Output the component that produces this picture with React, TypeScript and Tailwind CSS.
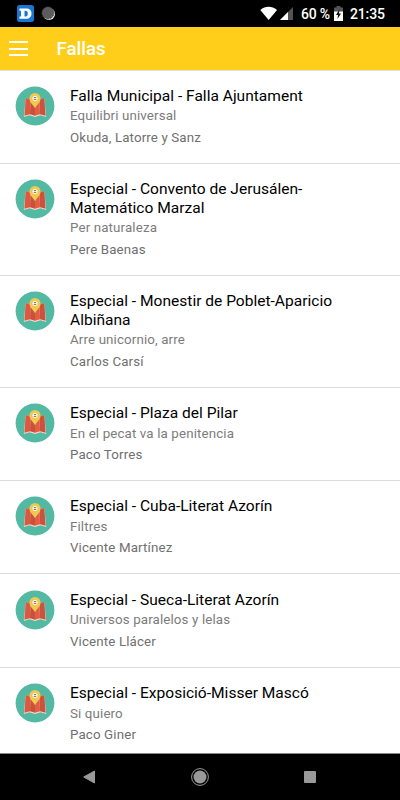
import React from 'react';

type Falla = { title: string[]; motto: string; artist: string };

const fallas: Falla[] = [
  { title: ['Falla Municipal - Falla Ajuntament'], motto: 'Equilibri universal', artist: 'Okuda, Latorre y Sanz' },
  { title: ['Especial - Convento de Jerusálen-', 'Matemático Marzal'], motto: 'Per naturaleza', artist: 'Pere Baenas' },
  { title: ['Especial - Monestir de Poblet-Aparicio', 'Albiñana'], motto: 'Arre unicornio, arre', artist: 'Carlos Carsí' },
  { title: ['Especial - Plaza del Pilar'], motto: 'En el pecat va la penitencia', artist: 'Paco Torres' },
  { title: ['Especial - Cuba-Literat Azorín'], motto: 'Filtres', artist: 'Vicente Martínez' },
  { title: ['Especial - Sueca-Literat Azorín'], motto: 'Universos paralelos y lelas', artist: 'Vicente Llácer' },
  { title: ['Especial - Exposició-Misser Mascó'], motto: 'Si quiero', artist: 'Paco Giner' },
];

function MapIcon() {
  return (
    <svg className="h-10 w-10 shrink-0" viewBox="0 0 40 40">
      <circle cx="20" cy="20" r="19.4" fill="#53b9a3" />
      <path d="M10.700 12 15.300 13.500 20 12 24.700 13.500 29.300 12 31.200 31 25.500 29.300 20 31 14.500 29.300 8.800 31Z" fill="#f3ddd0" />
      <path d="M10.700 12 15.500 13.500 15 28.300 9.400 29.800Z" fill="#dc5840" />
      <path d="M15.500 13.500 20 12V29.800L15 28.300Z" fill="#c9503b" />
      <path d="M20 12 24.500 13.500 25 28.300 20 29.800Z" fill="#e25e44" />
      <path d="M24.500 13.500 29.300 12 30.600 29.800 25 28.300Z" fill="#cc523d" />
      <path d="M20 22.300C18.700 19 14.500 16.800 14.500 12.400a5.500 5.500 0 0 1 11 0c0 4.400-4.200 6.600-5.500 9.900Z" fill="#f0ca50" />
      <circle cx="20" cy="12.400" r="2.500" fill="#fff" />
      <path d="M18.800 11h2.400v1h-2.400z" fill="#53988a" />
      <path d="M18.700 12.800h2.600v1.100h-2.600z" fill="#d84b42" />
    </svg>
  );
}

function StatusBar() {
  return (
    <div className="flex h-[27px] shrink-0 items-center bg-black pr-4 pl-[17px] text-white">
      <svg className="h-[17px] w-[17px]" viewBox="0 0 17 17">
        <rect width="17" height="17" rx="2.500" fill="#1976d2" />
        <path fillRule="evenodd" d="M2.500 3.500H9C12.500 3.500 14.500 5.300 14.500 8.500S12.500 13.800 9 13.800H2.500V11.500H4V5.800H2.500ZM7.500 5.800V11.500H8.500C10.200 11.500 10.800 10.500 10.800 8.600S10.200 5.800 8.500 5.800Z" fill="#fff" />
      </svg>
      <svg className="ml-[7px] h-[15px] w-[15px]" viewBox="0 0 15 15">
        <circle cx="8" cy="8" r="6" fill="#eee" />
        <circle cx="7" cy="7" r="6" fill="#5c5c5c" stroke="#555" strokeDasharray="1.200 .8" />
      </svg>
      <svg className="ml-auto h-[15px] w-[34px]" viewBox="0 0 34 15">
        <path d="M.3 4C5.400 -.2 11.800 -.2 17 4L8.650 14Z" fill="#fff" />
        <path d="M33 1V14H20Z" fill="#535353" />
        <path d="M28 6V14H20Z" fill="#fff" />
      </svg>
      <span className="mt-px ml-[7px] w-[33px] text-[14px] leading-4 font-medium tracking-[-0.200px] whitespace-nowrap">60 %</span>
      <svg className="h-[15px] w-[9px]" viewBox="0 0 9 15">
        <path d="M2.500 0h4v1.500H9V6H0V1.500h2.500Z" fill="#555" />
        <path d="M0 5.500h9V15H0Z" fill="#fff" />
        <path d="M5.300 3.500 2 9h2l-.5 4 3.500-5.500H5Z" fill="#111" />
      </svg>
      <span className="mt-px ml-[7px] w-[34px] text-[14px] leading-4 font-medium tracking-[-0.150px]">21:35</span>
    </div>
  );
}

export default function App() {
  return (
    <div className="flex h-[800px] w-[400px] flex-col overflow-hidden bg-white font-['Roboto',sans-serif]">
      <StatusBar />
      <header className="flex h-[43px] shrink-0 items-center bg-[#ffce1b] pl-[9px]">
        <div className="flex w-[19px] flex-col gap-[4.500px]">
          <span className="h-[2px] bg-white" />
          <span className="h-[2px] bg-white" />
          <span className="h-[2px] bg-white" />
        </div>
        <h1 className="ml-[28.500px] text-[18.670px] font-medium text-white">Fallas</h1>
      </header>
      <ul className="min-h-0 flex-1 overflow-hidden pt-[0.500px] shadow-[inset_0_1px_0_#e4e4e4]">
        {fallas.map((f) => (
          <li key={f.artist} className="flex border-b border-[#dcdcdc] pt-[16.170px] pb-[14.830px] pl-[15px]">
            <div className="-mt-[0.900px]"><MapIcon /></div>
            <div className="ml-[15px]">
              <h2 className="text-[15.560px] leading-[18.670px] text-black">
                {f.title.map((line) => <span key={line} className="block whitespace-nowrap">{line}</span>)}
              </h2>
              <p className="text-[13.330px] leading-[21.330px] tracking-[0.130px] text-[#7c7c7c]">{f.motto}</p>
              <p className="text-[13.330px] leading-[21.330px] tracking-[0.130px] text-[#707070]">{f.artist}</p>
            </div>
          </li>
        ))}
      </ul>
      <nav className="flex h-[47px] shrink-0 items-center border-t border-[#888] bg-black pl-[83px]">
        <svg className="h-[14px] w-[12px]" viewBox="0 0 12 14"><path d="M11.500 1V13L.7 7Z" fill="#999" stroke="#999" strokeLinejoin="round" /></svg>
        <svg className="ml-[96px] h-[18px] w-[18px]" viewBox="0 0 18 18">
          <circle cx="9" cy="9" r="8.400" fill="none" stroke="#999" />
          <circle cx="9" cy="9" r="6.500" fill="#999" />
        </svg>
        <span className="ml-[95px] h-[12px] w-[12px] rounded-[1px] bg-[#999]" />
      </nav>
    </div>
  );
}
